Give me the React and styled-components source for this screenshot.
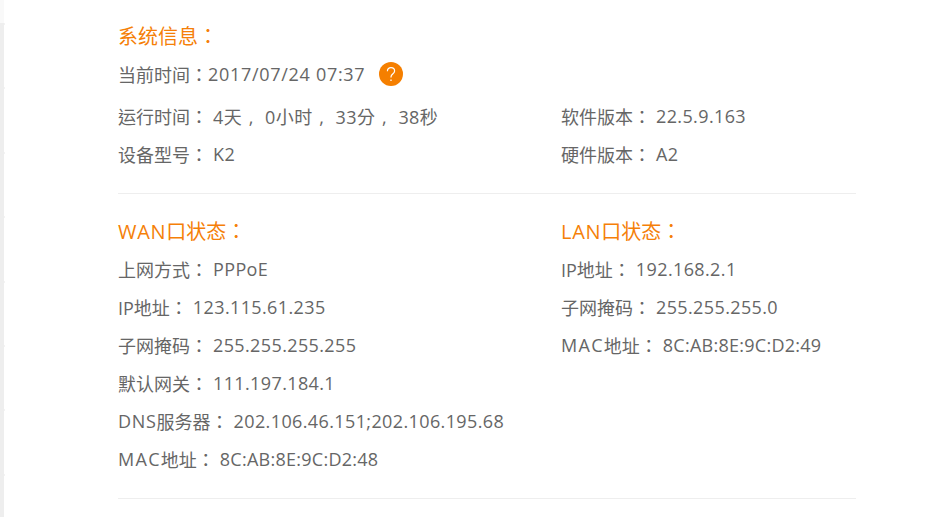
import React from 'react';
import styled, { createGlobalStyle } from 'styled-components';

const GlobalStyle = createGlobalStyle`
  html, body {
    margin: 0;
    padding: 0;
    background: #fff;
    overflow: hidden;
  }
`;

const Page = styled.div`
  display: flex;
  height: 517px;
  font-family: "Open Sans", "Noto Sans CJK TC", sans-serif;
  font-size: 18px;
  color: #666;
`;

const Rail = styled.div`
  flex: 0 0 4px;
  background: linear-gradient(#f9f9f9 23px, #eee 23px);
`;

const RailTicks = styled.div`
  flex: 0 0 1px;
  margin-top: 23px;
  background: repeating-linear-gradient(#f3f3f3 0 2px, transparent 2px 64.4px);
`;

const Content = styled.main`
  width: 738px;
  margin-left: 113px;
  padding-top: 17px;
`;

const Section = styled.section`
  padding-bottom: 20px;
  border-bottom: 1px solid #eee;
  margin-bottom: 18px;
`;

const Columns = styled.div`
  display: grid;
  grid-template-columns: 443px 1fr;
`;

const Heading = styled.h3`
  margin: 0;
  height: 38px;
  line-height: 40px;
  font-size: 20px;
  font-weight: 400;
  color: #f57f08;
`;

const Row = styled.div`
  display: flex;
  align-items: center;
  height: 38px;
  white-space: pre;
`;

const TimeRow = styled(Row)`
  margin-bottom: 4px;
`;

const Acronym = styled.span`
  letter-spacing: ${(p) => p.$spread}px;
`;

const Value = styled.span`
  margin-left: 5px;
  letter-spacing: ${(p) => p.$spacing ?? 0.38}px;
`;

const Clock = styled.span`
  letter-spacing: 0.7px;
`;

const Sep = styled.span`
  display: inline-block;
  width: 18px;
  text-align: center;
  letter-spacing: 0;
`;

const Help = styled.span`
  display: flex;
  align-items: center;
  justify-content: center;
  width: 24px;
  height: 24px;
  margin-left: 14px;
  border-radius: 50%;
  background: #f57f00;
`;

const Info = ({ label, spacing, children }) => (
  <Row>
    {label}：<Value $spacing={spacing}>{children}</Value>
  </Row>
);

const App = () => {
  return (
    <Page>
      <GlobalStyle />
      <Rail />
      <RailTicks />
      <Content>
        <Section>
          <Heading>系统信息：</Heading>
          <TimeRow>
            当前时间：<Clock>2017/07/24 07:37</Clock>
            <Help>
              <svg width="24" height="24" viewBox="0 0 24 24" fill="none">
                <path
                  d="M8.4 9.2c0-2.3 1.6-3.6 3.6-3.6s3.6 1.3 3.6 3.3c0 1.5-.9 2.3-1.9 3.1-1 .8-1.7 1.5-1.7 2.9v.6"
                  stroke="#fff"
                  strokeWidth="1.2"
                />
                <path d="M12 17.4v1.5" stroke="#fff" strokeWidth="1.3" />
              </svg>
            </Help>
          </TimeRow>
          <Columns>
            <Info label="运行时间">
              4天<Sep>,</Sep> 0小时<Sep>,</Sep> 33分<Sep>,</Sep> 38秒
            </Info>
            <Info label="软件版本">22.5.9.163</Info>
            <Info label="设备型号">K2</Info>
            <Info label="硬件版本">A2</Info>
          </Columns>
        </Section>
        <Section>
          <Columns>
            <div>
              <Heading><Acronym $spread={0.7}>WAN</Acronym>口状态：</Heading>
              <Info label="上网方式">PPPoE</Info>
              <Info label="IP地址">123.115.61.235</Info>
              <Info label="子网掩码">255.255.255.255</Info>
              <Info label="默认网关">111.197.184.1</Info>
              <Info label={<><Acronym $spread={0.7}>DNS</Acronym>服务器</>}>
                202.106.46.151;202.106.195.68
              </Info>
              <Info label={<><Acronym $spread={1.3}>MAC</Acronym>地址</>} spacing={0.26}>
                8C:AB:8E:9C:D2:48
              </Info>
            </div>
            <div>
              <Heading><Acronym $spread={0.7}>LAN</Acronym>口状态：</Heading>
              <Info label="IP地址">192.168.2.1</Info>
              <Info label="子网掩码">255.255.255.0</Info>
              <Info label={<><Acronym $spread={1.3}>MAC</Acronym>地址</>} spacing={0.26}>
                8C:AB:8E:9C:D2:49
              </Info>
            </div>
          </Columns>
        </Section>
      </Content>
    </Page>
  );
};

export default App;
